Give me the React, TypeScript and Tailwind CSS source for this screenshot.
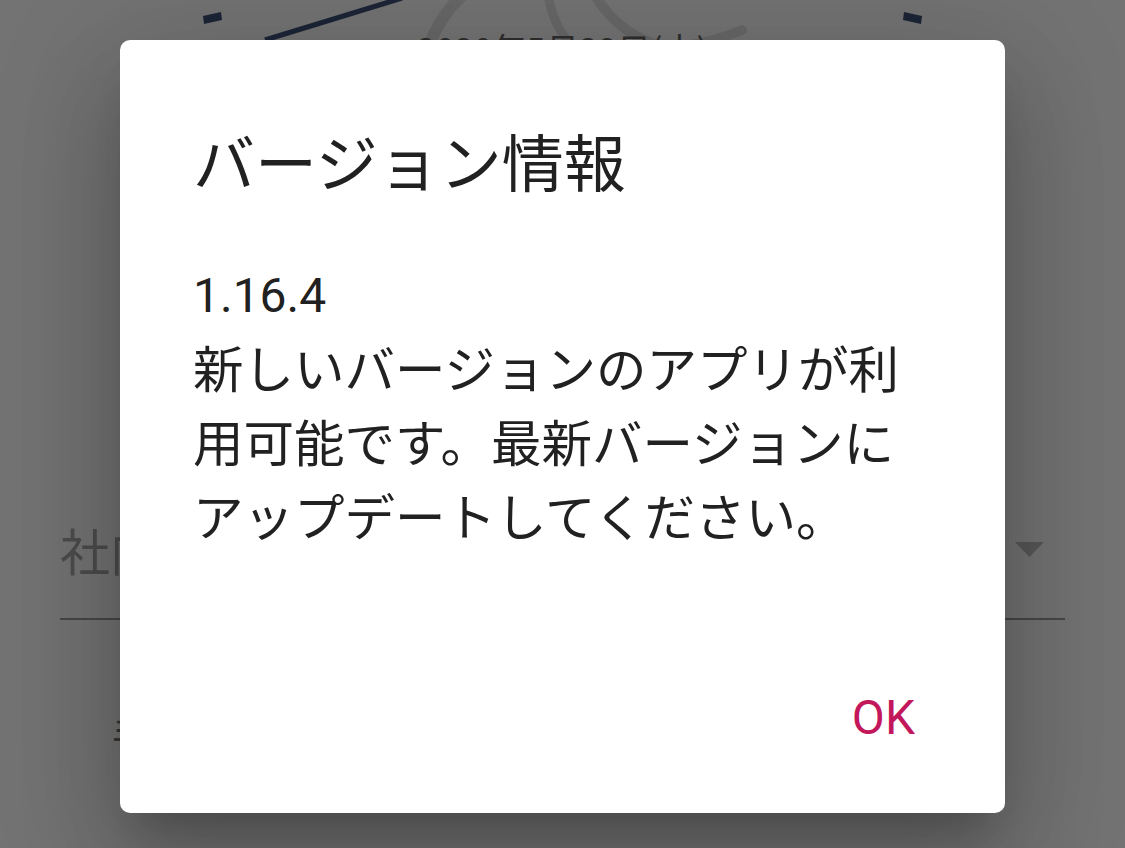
import React from 'react';

// Background screen (dimmed behind the dialog)
function ClockArt() {
  return (
    <svg className="absolute inset-0" width="1125" height="120" viewBox="0 0 1125 120" fill="none">
      <path d="M428 48 Q440 15 464 -6" stroke="#e4e4e4" strokeWidth="12" strokeLinecap="round" />
      <path d="M548 -6 Q552 22 568 42" stroke="#e4e4e4" strokeWidth="9" strokeLinecap="round" />
      <path d="M594 -6 Q620 36 662 46 Q700 48 742 30" stroke="#e4e4e4" strokeWidth="10" strokeLinecap="round" />
      <polygon points="203,16 221,12 222,20 204,24" fill="#3f5278" />
      <polygon points="904,12 922,16 921,24 903,20" fill="#3f5278" />
      <line x1="265" y1="40" x2="402" y2="-2" stroke="#3f5278" strokeWidth="5" />
    </svg>
  );
}

function BackgroundPage() {
  return (
    <div className="font-['Noto_Sans_CJK_JP','Noto_Sans',sans-serif]">
      <div className="relative h-[120px]">
        <ClockArt />
        <p className="relative pt-[32px] text-center text-[34px] leading-none text-[#666666]">
          2020年5月29日(土)
        </p>
      </div>

      <div className="mx-[60px] mt-[404px] flex items-center justify-between border-b-2 border-[#9e9e9e] pb-[44px] pr-[21px]">
        <span className="text-[50px] leading-none text-[#a9a9a9]">社内</span>
        <svg width="29" height="15" viewBox="0 0 29 15">
          <polygon points="0,0 29,0 14.5,15" fill="#c2c2c2" />
        </svg>
      </div>

      <p className="mt-[94px] pl-[112px] text-[40px] leading-none text-[#777777]">手動</p>
    </div>
  );
}

export default function App() {
  return (
    <div className="relative h-[848px] w-[1125px] overflow-hidden bg-white">
      <BackgroundPage />

      {/* Scrim + dialog */}
      <div className="absolute inset-0 flex justify-center bg-black/55 pt-[40px]">
        <div className="flex h-[773px] w-[885px] flex-col rounded-[10px] bg-white px-[73px] shadow-[0_63px_100px_8px_rgba(0,0,0,0.14),0_24px_120px_21px_rgba(0,0,0,0.12),0_29px_39px_-18px_rgba(0,0,0,0.2)]">
          <h1 className="pt-[89px] font-['Noto_Sans_CJK_JP',sans-serif] text-[62px] font-normal leading-[62px] text-[#212121]">
            バージョン情報
          </h1>

          <p className="mt-[72px] font-['Roboto','Noto_Sans_CJK_JP',sans-serif] text-[48px] leading-[66px] text-[#212121]">
            1.16.4
          </p>
          <p className="font-['Noto_Sans_CJK_JP',sans-serif] text-[50.5px] leading-[74px] text-[#212121]">
            新しいバージョンのアプリが利用可能です。最新バージョンにアップデートしてください。
          </p>

          <div className="mt-auto flex justify-end pb-[71px]">
            <button
              type="button"
              className="px-[17px] font-['Roboto',sans-serif] text-[48px] font-normal leading-[48px] text-[#c2185b]"
            >
              OK
            </button>
          </div>
        </div>
      </div>
    </div>
  );
}
